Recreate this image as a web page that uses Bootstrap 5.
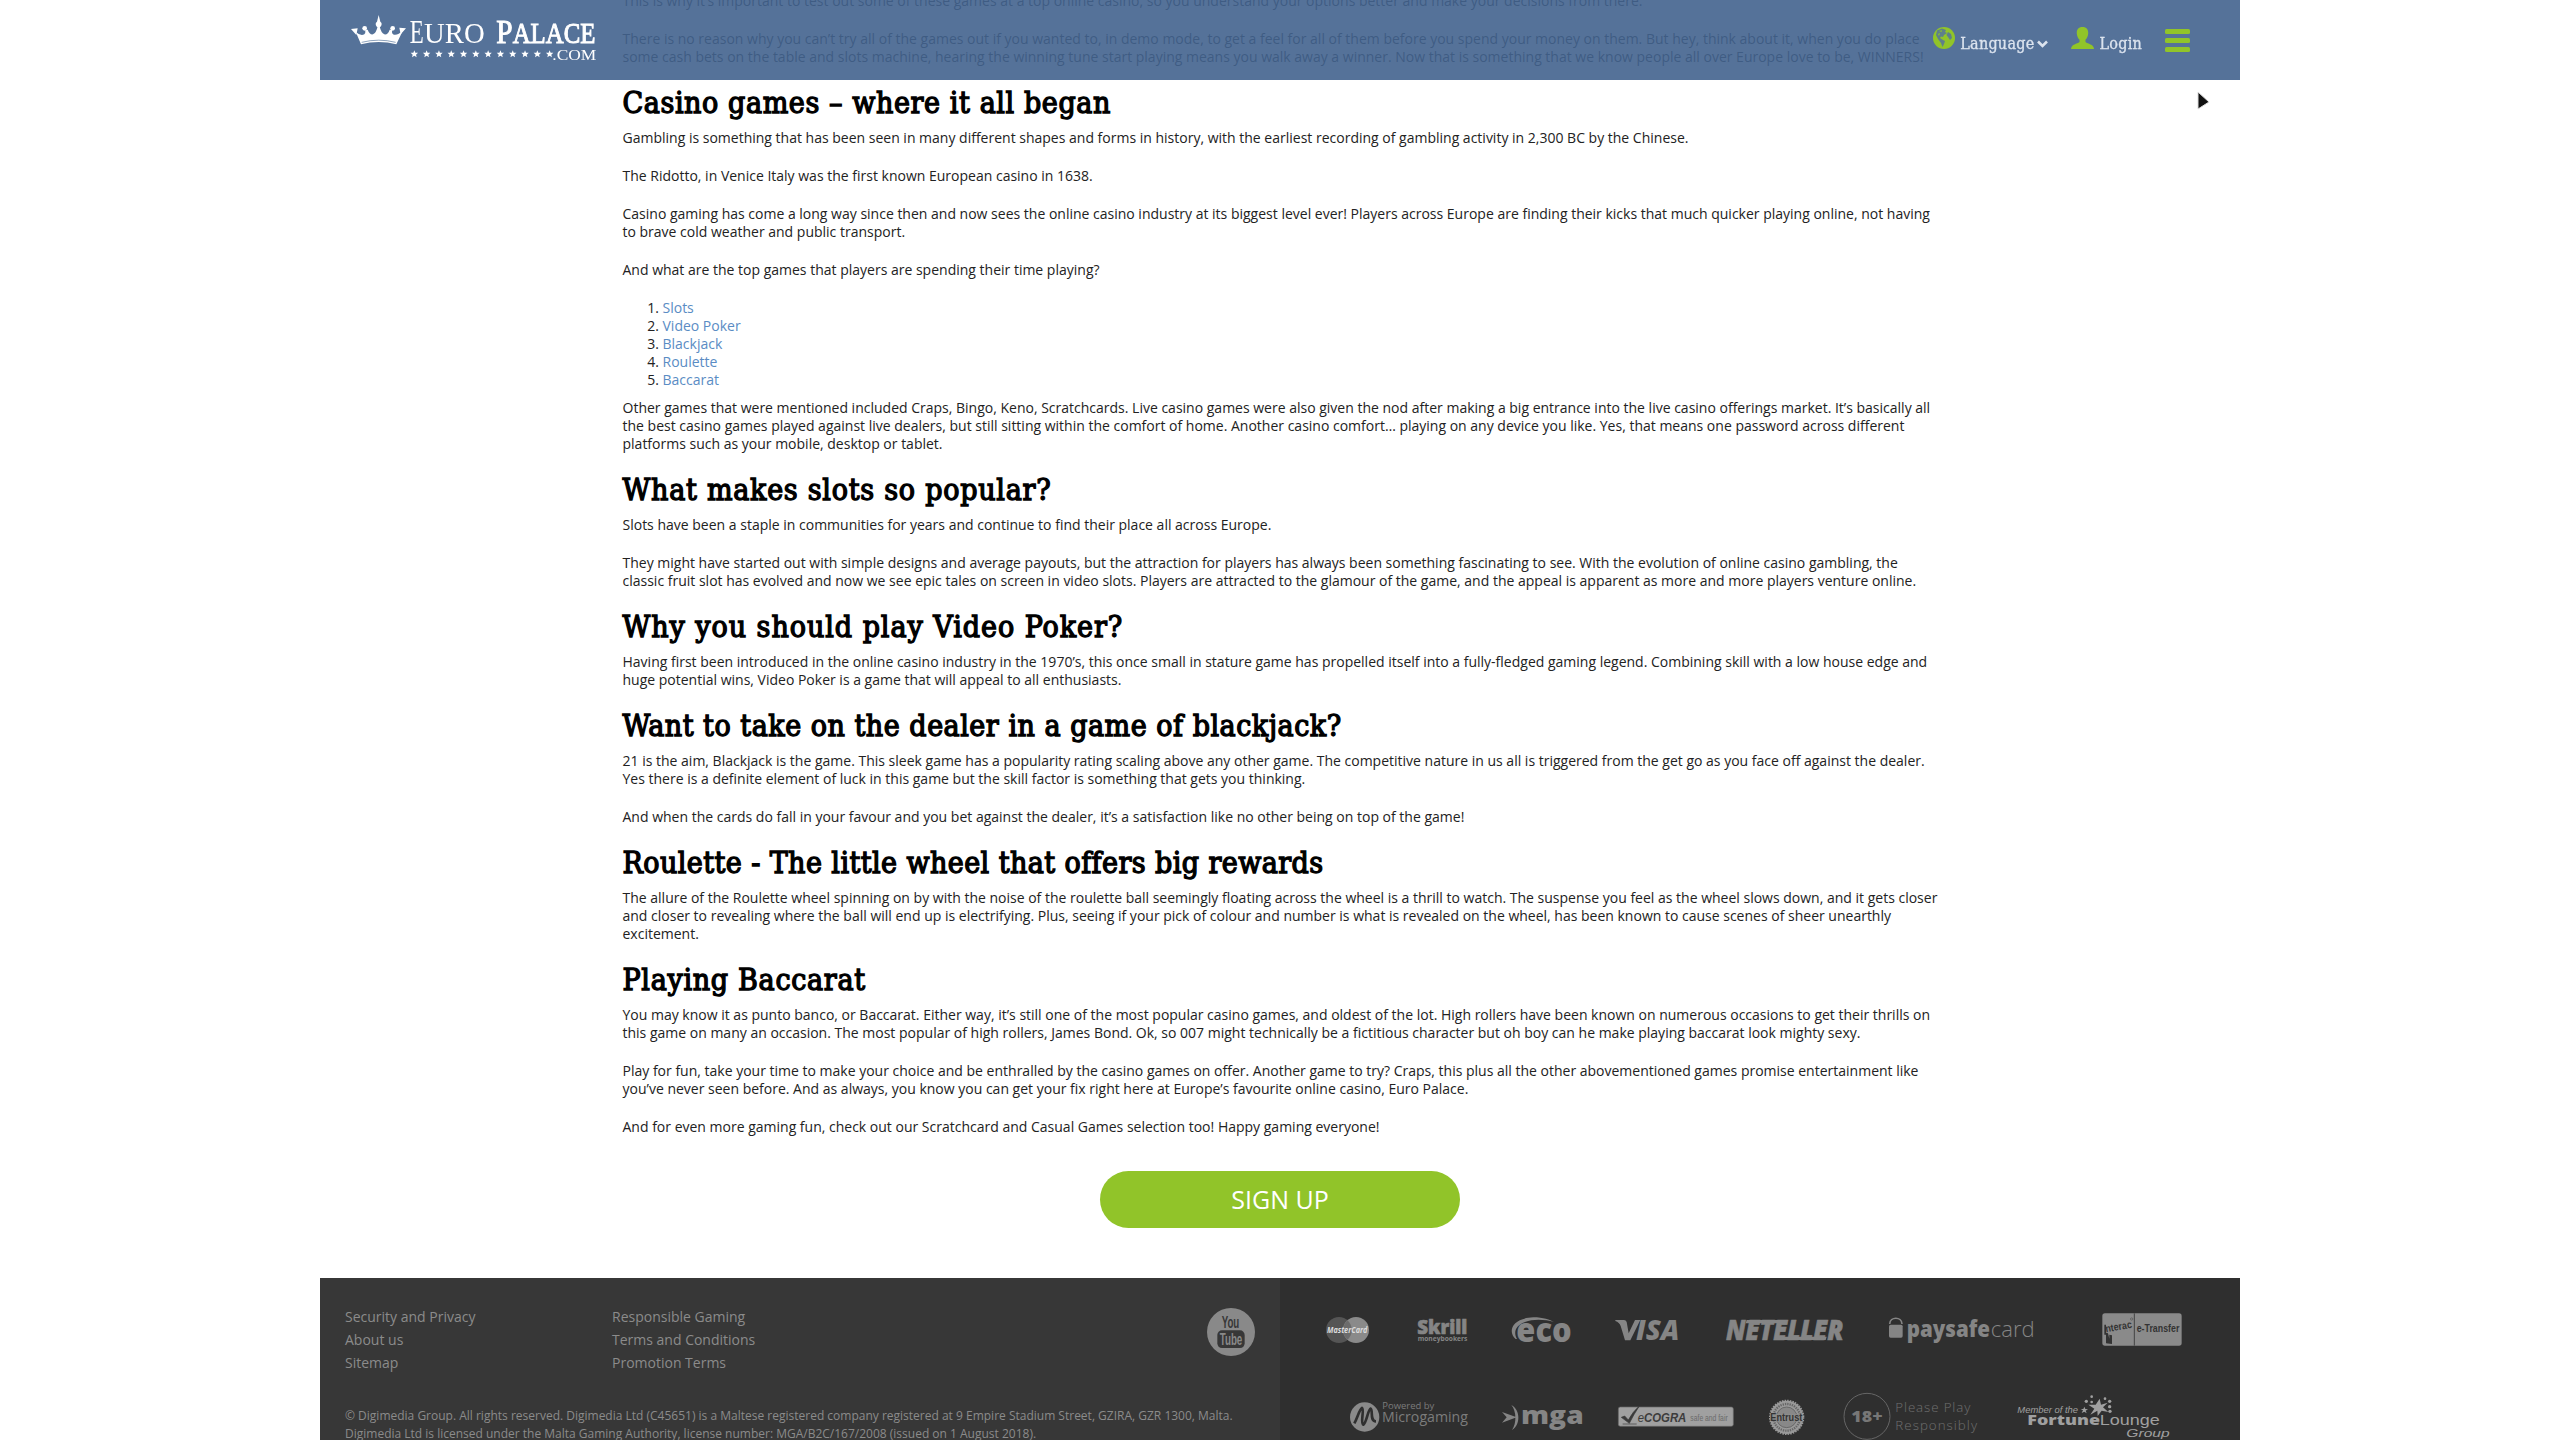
<!DOCTYPE html>
<html lang="en">
<head>
<meta charset="utf-8">
<title>Euro Palace Casino</title>
<meta name="viewport" content="width=device-width, initial-scale=1">
<link href="https://cdn.jsdelivr.net/npm/bootstrap@5.3.0/dist/css/bootstrap.min.css" rel="stylesheet">
<style>
  html, body { height: 100%; overflow: hidden; }
  body { font: 14px/18px "Open Sans", sans-serif; color: #222; background: #fff; }
  .page-shell { width: 1920px; margin: 0 auto; }
  .site-header { width: 1920px; height: 80px; margin: 0 auto; padding: 0 50px 0 30px; background: rgba(66,99,142,.9); }
  .brand-logo { display: block; margin-top: -5px; }
  .nav-slab { font: 16px/20px "DejaVu Serif Condensed", serif; color: #dbe3ee; letter-spacing: .25px; -webkit-text-stroke: .3px #dbe3ee; }
  .nav-slab:hover { color: #fff; }
  .nav-slab span { margin: 7px 3px 0 5px; }
  .nav-slab .nav-caret { margin-top: 13px; }
  .nav-account { margin-left: 23px; }
  .nav-account span { margin-right: 0; }
  .nav-burger { margin: 2px 0 0 23px; }
  .article-copy { width: 1320px; margin: -8px 0 0 302.5px; white-space: nowrap; }
  .article-copy p { margin-bottom: 20px; }
  .article-copy h2 { font: 400 30px/33px "DejaVu Serif Condensed", serif; color: #000; margin: 0 0 10px; -webkit-text-stroke: 1.3px #000; letter-spacing: .6px; }
  .article-copy .h-slots { letter-spacing: .75px; }
  .article-copy .h-poker { letter-spacing: .96px; }
  .article-copy .h-jack { letter-spacing: .52px; }
  .article-copy .h-wheel { letter-spacing: .43px; }
  .article-copy .h-bacc { letter-spacing: .7px; }
  .article-copy ol { margin: 0 0 10px; padding-left: 40px; }
  .article-copy a { color: #5a8cc4; text-decoration: none; }
  .btn-signup { width: 360px; height: 57px; margin: 15px 0 50px; border-radius: 29px; background: #91c429; color: #fff; font-size: 25px; line-height: 1; border: 0; }
  .btn-signup:hover { background: #83b422; color: #fff; }
  .foot-left { width: 960px; height: 170px; background: #373737; padding: 27px 25px 0; }
  .foot-right { width: 960px; height: 170px; background: #2f2f2f; padding: 27px 0 0 46px; }
  .foot-links a { color: #8b8b8b; text-decoration: none; line-height: 23px; display: block; }
  .foot-links ul { width: 267px; }
  .yt-badge { margin: 3px 0 0 328px; }
  .legal-copy { font-size: 12px; line-height: 18px; color: #8b8b8b; margin-top: 33px; white-space: nowrap; }
  .logo-strip svg { flex: none; height: 50px; overflow: visible; }
  .logo-strip + .logo-strip { margin: 35px 0 0 24px; }
  .mouse-pointer { left: 2197px; top: 91px; z-index: 1040; }
  svg text { white-space: pre; }
</style>
</head>
<body>
<header class="site-header fixed-top d-flex align-items-center justify-content-between">
  <a href="#" aria-label="Euro Palace"><svg class="brand-logo" width="250" height="65" viewBox="29 0 750 195">
    <g fill="#fff">
      <path d="M62 118 L46 80 Q60 94 72 88 Q76 84 75 74 L82 74 Q88 90 98 88 Q108 84 112 64 L118 64 Q122 84 132 88 Q143 90 148 74 L155 74 Q154 84 158 88 Q170 94 188 76 L168 118 Q115 104 62 118Z"/>
      <path d="M115 30 L120 50 Q128 56 120 66 L110 66 Q102 56 110 50Z"/>
      <circle cx="73" cy="70" r="7"/><circle cx="157" cy="70" r="7"/><path d="M32 72 L52 70 L48 90Z M197 70 L177 68 L181 88Z"/>
    </g>
    <path d="M64 112 Q115 99 166 112" fill="none" stroke="#55749b" stroke-width="2"/>
    <g fill="#fff" font-family="Liberation Serif, serif">
      <text x="208" y="115" font-size="102" textLength="42" lengthAdjust="spacingAndGlyphs">E</text>
      <text x="251" y="115" font-size="88" textLength="182" lengthAdjust="spacingAndGlyphs">URO</text>
      <g stroke="#fff" stroke-width="3"><text x="468" y="115" font-size="102" textLength="49" lengthAdjust="spacingAndGlyphs">P</text>
      <text x="517" y="115" font-size="88" textLength="248" lengthAdjust="spacingAndGlyphs">ALACE</text></g>
      <text x="636" y="166" font-size="45" textLength="132" lengthAdjust="spacingAndGlyphs">.COM</text>
    </g>
    <g id="stars" fill="#fff"></g>
  </svg></a>
  <nav class="d-flex align-items-start">
    <a class="nav-slab d-flex text-decoration-none" href="#">
      <svg width="22" height="22" viewBox="0 0 22 22"><circle cx="11" cy="11" r="11" fill="#91c429"/><path d="M4 3.5 L9 1.5 L13 3 L12 5 L14 6 L11 8 L10 10 L8 9.500 L7 11 L10 13 L12 14 L11 17 L9.500 20 L8 16 L5 12 L3 8Z M15 5 L18 7 L19 11 L17 13 L15 10 L13.500 8Z" fill="#55749b" opacity=".85"/><path d="M6 4 L9 3.200 L8.500 5Z M5 7 L7 6 L6 9Z" fill="#91c429"/></svg>
      <span>Language</span>
      <svg class="nav-caret" width="11" height="8" viewBox="0 0 11 8"><path d="M1 1.500 L5.500 6 L10 1.500" fill="none" stroke="#dbe3ee" stroke-width="2.600"/></svg>
    </a>
    <a class="nav-slab nav-account d-flex text-decoration-none" href="#">
      <svg width="23" height="22" viewBox="0 0 23 22"><path d="M11.500 0 C15.500 0 17.500 2.500 17.200 6.500 C17 9.500 15.800 11.500 14.500 12.800 V15 C17 17 22.500 17 23 22 H0 C.5 17 6 17 8.500 15 V12.800 C7.200 11.500 6 9.500 5.800 6.500 C5.500 2.500 7.500 0 11.500 0Z" fill="#91c429"/></svg>
      <span>Login</span>
    </a>
    <a class="nav-burger" href="#" aria-label="Menu"><svg class="d-block" width="25" height="23" viewBox="0 0 25 23" fill="#91c429"><rect width="25" height="5" rx="1.500"/><rect y="9" width="25" height="5" rx="1.500"/><rect y="18" width="25" height="5" rx="1.500"/></svg></a>
  </nav>
</header>

<svg class="mouse-pointer position-fixed" width="16" height="22" viewBox="0 0 16 22"><path d="M1 1 V18 L12 11Z" fill="#111" stroke="#ddd" stroke-width="1"/></svg>

<div class="page-shell">
  <main class="article-copy">
    <p>This is why it’s important to test out some of these games at a top online casino, so you understand your options better and make your decisions from there.</p>
    <p>There is no reason why you can’t try all of the games out if you wanted to, in demo mode, to get a feel for all of them before you spend your money on them. But hey, think about it, when you do place<br>some cash bets on the table and slots machine, hearing the winning tune start playing means you walk away a winner. Now that is something that we know people all over Europe love to be, WINNERS!</p>

    <h2>Casino games – where it all began</h2>
    <p>Gambling is something that has been seen in many different shapes and forms in history, with the earliest recording of gambling activity in 2,300 BC by the Chinese.</p>
    <p>The Ridotto, in Venice Italy was the first known European casino in 1638.</p>
    <p>Casino gaming has come a long way since then and now sees the online casino industry at its biggest level ever! Players across Europe are finding their kicks that much quicker playing online, not having<br>to brave cold weather and public transport.</p>
    <p>And what are the top games that players are spending their time playing?</p>
    <ol>
      <li><a href="#">Slots</a></li>
      <li><a href="#">Video Poker</a></li>
      <li><a href="#">Blackjack</a></li>
      <li><a href="#">Roulette</a></li>
      <li><a href="#">Baccarat</a></li>
    </ol>
    <p>Other games that were mentioned included Craps, Bingo, Keno, Scratchcards. Live casino games were also given the nod after making a big entrance into the live casino offerings market. It’s basically all<br>the best casino games played against live dealers, but still sitting within the comfort of home. Another casino comfort… playing on any device you like. Yes, that means one password across different<br>platforms such as your mobile, desktop or tablet.</p>

    <h2 class="h-slots">What makes slots so popular?</h2>
    <p>Slots have been a staple in communities for years and continue to find their place all across Europe.</p>
    <p>They might have started out with simple designs and average payouts, but the attraction for players has always been something fascinating to see. With the evolution of online casino gambling, the<br>classic fruit slot has evolved and now we see epic tales on screen in video slots. Players are attracted to the glamour of the game, and the appeal is apparent as more and more players venture online.</p>

    <h2 class="h-poker">Why you should play Video Poker?</h2>
    <p>Having first been introduced in the online casino industry in the 1970’s, this once small in stature game has propelled itself into a fully-fledged gaming legend. Combining skill with a low house edge and<br>huge potential wins, Video Poker is a game that will appeal to all enthusiasts.</p>

    <h2 class="h-jack">Want to take on the dealer in a game of blackjack?</h2>
    <p>21 is the aim, Blackjack is the game. This sleek game has a popularity rating scaling above any other game. The competitive nature in us all is triggered from the get go as you face off against the dealer.<br>Yes there is a definite element of luck in this game but the skill factor is something that gets you thinking.</p>
    <p>And when the cards do fall in your favour and you bet against the dealer, it’s a satisfaction like no other being on top of the game!</p>

    <h2 class="h-wheel">Roulette - The little wheel that offers big rewards</h2>
    <p>The allure of the Roulette wheel spinning on by with the noise of the roulette ball seemingly floating across the wheel is a thrill to watch. The suspense you feel as the wheel slows down, and it gets closer<br>and closer to revealing where the ball will end up is electrifying. Plus, seeing if your pick of colour and number is what is revealed on the wheel, has been known to cause scenes of sheer unearthly<br>excitement.</p>

    <h2 class="h-bacc">Playing Baccarat</h2>
    <p>You may know it as punto banco, or Baccarat. Either way, it’s still one of the most popular casino games, and oldest of the lot. High rollers have been known on numerous occasions to get their thrills on<br>this game on many an occasion. The most popular of high rollers, James Bond. Ok, so 007 might technically be a fictitious character but oh boy can he make playing baccarat look mighty sexy.</p>
    <p>Play for fun, take your time to make your choice and be enthralled by the casino games on offer. Another game to try? Craps, this plus all the other abovementioned games promise entertainment like<br>you’ve never seen before. And as always, you know you can get your fix right here at Europe’s favourite online casino, Euro Palace.</p>
    <p>And for even more gaming fun, check out our Scratchcard and Casual Games selection too! Happy gaming everyone!</p>
  </main>
  <div class="d-flex justify-content-center"><a href="#" class="btn btn-signup d-flex align-items-center justify-content-center">SIGN UP</a></div>

  <footer class="d-flex">
    <section class="foot-left">
      <div class="foot-links d-flex align-items-start">
        <ul class="list-unstyled mb-0"><li><a href="#">Security and Privacy</a></li><li><a href="#">About us</a></li><li><a href="#">Sitemap</a></li></ul>
        <ul class="list-unstyled mb-0"><li><a href="#">Responsible Gaming</a></li><li><a href="#">Terms and Conditions</a></li><li><a href="#">Promotion Terms</a></li></ul>
        <svg class="yt-badge" width="48" height="48" viewBox="321 444 144 144"><circle cx="393" cy="516" r="72" fill="#898989"/><rect x="352" y="511" width="82" height="53" rx="14" fill="#373737"/>
          <g font-family="Liberation Sans, sans-serif" font-weight="700"><text x="365" y="504" font-size="50" textLength="53" lengthAdjust="spacingAndGlyphs" fill="#373737">You</text><text x="359" y="556" font-size="50" textLength="68" lengthAdjust="spacingAndGlyphs" fill="#898989">Tube</text></g></svg>
      </div>
      <p class="legal-copy mb-0">© Digimedia Group. All rights reserved. Digimedia Ltd (C45651) is a Maltese registered company registered at 9 Empire Stadium Street, GZIRA, GZR 1300, Malta.<br>Digimedia Ltd is licensed under the Malta Gaming Authority, license number: MGA/B2C/167/2008 (issued on 1 August 2018).</p>
    </section>
    <section class="foot-right">
      <div class="logo-strip d-flex">
        <!-- MasterCard -->
        <svg width="92" viewBox="78 45 276 150"><circle cx="117" cy="120" r="39" fill="#555"/><circle cx="168" cy="120" r="39" fill="#8a8a8a"/><path d="M142.500 91 A39 39 0 0 1 142.500 149 A39 39 0 0 1 142.500 91Z" fill="#6c6c6c"/><text x="81" y="129" font-family="Open Sans, sans-serif" font-weight="700" font-style="italic" font-size="24" textLength="121" lengthAdjust="spacingAndGlyphs" fill="#ddd">MasterCard</text></svg>
        <!-- Skrill -->
        <svg width="93" viewBox="354 45 279 150" fill="#858585" font-family="Open Sans, sans-serif" font-weight="800"><text x="352" y="131" font-size="60" textLength="150" lengthAdjust="spacingAndGlyphs" stroke="#858585" stroke-width="2">Skrill</text><text x="353" y="154" font-size="22" font-weight="700" textLength="149" lengthAdjust="spacingAndGlyphs">moneybookers</text></svg>
        <!-- Eco -->
        <svg width="104" viewBox="633 45 312 150" fill="#858585"><path d="M647 147 C620 122 640 84 700 82 C730 82 750 90 762 96 C735 88 700 86 675 96 C645 107 640 128 651 147Z"/><text x="649" y="157" font-family="Open Sans, sans-serif" font-weight="800" font-size="100" textLength="166" lengthAdjust="spacingAndGlyphs">eco</text></svg>
        <!-- Visa -->
        <svg width="111" viewBox="945 45 333 150" fill="#858585"><path d="M946 90 H972 Q978 90 980 96 L986 130 L1005 90 H1021 L991 151 H975 L962 108 Q958 97 946 93Z"/><text x="1008" y="151" font-family="Open Sans, sans-serif" font-weight="800" font-style="italic" font-size="84" textLength="130" lengthAdjust="spacingAndGlyphs">ISA</text></svg>
        <!-- Neteller -->
        <svg width="163" viewBox="78 15 489 150" fill="#858585"><text x="78" y="120" font-family="Open Sans, sans-serif" font-weight="800" font-style="italic" font-size="83" textLength="352" lengthAdjust="spacingAndGlyphs" stroke="#858585" stroke-width="2">NETELLER</text><path d="M245 110 H380 L377 120 H242Z M140 60 H245 L242 70 H137Z"/></svg>
        <!-- paysafecard -->
        <svg width="213" viewBox="567 15 639 150" fill="#858585"><rect x="567" y="74" width="41" height="39" rx="5"/><path d="M569 72 C570 49 605 49 606 72" fill="none" stroke="#858585" stroke-width="5"/><text x="620" y="111" font-family="Open Sans, sans-serif" font-weight="800" font-size="66" textLength="250" lengthAdjust="spacingAndGlyphs">paysafe</text><text x="872" y="111" font-family="Open Sans, sans-serif" font-weight="300" font-size="66" textLength="132" lengthAdjust="spacingAndGlyphs">card</text></svg>
        <!-- Interac e-Transfer -->
        <svg width="80" viewBox="996 45 240 150"><rect x="997" y="70" width="238" height="97" rx="8" fill="#8a8a8a"/><path d="M1093 70 V167" stroke="#444" stroke-width="3"/><path d="M1003 104 V134 H1008 V160 L1026 162 V136 L1018 134 V146 L1014 130 L1008 128 V104Z" fill="#333"/><g font-family="Liberation Sans, sans-serif" font-weight="700" fill="#333"><text x="1008" y="127" font-size="31" textLength="80" lengthAdjust="spacingAndGlyphs" transform="rotate(-10 1008 127)">nterac</text><text x="1100" y="126" font-size="30" textLength="128" lengthAdjust="spacingAndGlyphs">e-Transfer</text></g><circle cx="1085" cy="87" r="3.500" fill="none" stroke="#444" stroke-width="1.500"/></svg>
      </div>
      <div class="logo-strip d-flex">
        <!-- Microgaming -->
        <svg width="152" viewBox="150 300 456 150"><circle cx="194" cy="381" r="44" fill="#8a8a8a"/><path d="M163 400 C172 385 178 358 186 354 C194 358 180 400 190 404 C199 400 204 358 212 356 C220 360 208 394 228 394" fill="none" stroke="#2f2f2f" stroke-width="8"/><g font-family="Open Sans, sans-serif" fill="#7c7c7c"><text x="247" y="358" font-size="29" textLength="156" lengthAdjust="spacingAndGlyphs">Powered by</text><text x="246" y="396" font-size="42" textLength="258" lengthAdjust="spacingAndGlyphs">Microgaming</text></g></svg>
        <!-- MGA -->
        <svg width="116" viewBox="606 300 348 150" fill="#858585"><path d="M606 366 L650 382 L606 398 L620 382Z M634 345 C662 360 662 405 636 420 C650 400 650 364 634 345Z"/><text x="663" y="401" font-family="Open Sans, sans-serif" font-weight="800" font-size="76" textLength="188" lengthAdjust="spacingAndGlyphs">mga</text></svg>
        <!-- eCOGRA -->
        <svg width="151" viewBox="954 300 453 150"><rect x="955" y="351" width="345" height="58" rx="6" fill="#a0a0a0" stroke="#666" stroke-width="2"/><path d="M964 382 L974 378 L985 390 Q998 365 1018 348 Q1000 375 988 400Z M968 402 L1010 402" fill="#3a3a3a" stroke="#3a3a3a" stroke-width="2"/><g font-family="Liberation Sans, sans-serif"><text x="1013" y="395" font-size="38" font-style="italic" textLength="146" lengthAdjust="spacingAndGlyphs" fill="#3c3c3c">e<tspan font-weight="700">COGRA</tspan></text><text x="1171" y="392" font-size="27" textLength="112" lengthAdjust="spacingAndGlyphs" fill="#6a6a6a">safe and fair</text></g></svg>
        <!-- Entrust -->
        <svg width="74" viewBox="207 270 222 150"><circle cx="260" cy="352" r="50" fill="#999"/><circle cx="260" cy="352" r="50" fill="none" stroke="#999" stroke-width="6" stroke-dasharray="4.500 3.354"/><circle cx="260" cy="352" r="31" fill="#888" stroke="#555" stroke-width="2"/><circle cx="260" cy="352" r="40" fill="none" stroke="#666" stroke-width="7" stroke-dasharray="4 3"/><rect x="211" y="342" width="96" height="22" fill="#8c8c8c"/><text x="211" y="363" font-family="Liberation Sans, sans-serif" font-weight="700" font-size="30" textLength="96" lengthAdjust="spacingAndGlyphs" fill="#333">Entrust</text></svg>
        <!-- 18+ -->
        <svg width="174" viewBox="429 270 522 150" font-family="Open Sans, sans-serif"><circle cx="501" cy="349" r="69" fill="none" stroke="#666" stroke-width="3"/><text x="454" y="365" font-size="47" font-weight="800" textLength="94" lengthAdjust="spacingAndGlyphs" fill="#777">18+</text><g fill="#707070" font-size="40" font-weight="300"><text x="586" y="335" textLength="225" lengthAdjust="spacing">Please Play</text><text x="586" y="390" textLength="245" lengthAdjust="spacing">Responsibly</text></g></svg>
        <!-- Fortune Lounge Group -->
        <svg width="153" viewBox="742 300 459 150" fill="#a0a0a0" font-family="Liberation Sans, sans-serif"><text x="743" y="370" font-size="27" font-style="italic" textLength="182" lengthAdjust="spacingAndGlyphs">Member of the</text><text x="773" y="406" font-family="Open Sans, sans-serif" font-weight="800" font-size="40" textLength="218" lengthAdjust="spacingAndGlyphs">Fortune</text><text x="990" y="406" font-size="42" textLength="180" lengthAdjust="spacingAndGlyphs">Lounge</text><text x="1070" y="440" font-size="35" font-style="italic" textLength="130" lengthAdjust="spacingAndGlyphs">Group</text><path d="M990 326 L994 344 L1014 338 L1000 352 L1016 366 L996 362 L984 378 L983 362 L962 374 L974 356 L956 344 L978 344Z M944 350 L947 357 L955 358 L948 362 L951 370 L944 365 L936 369 L940 361 L933 357 L941 357Z"/><circle cx="966" cy="320" r="4"/><circle cx="950" cy="334" r="5"/><circle cx="966" cy="336" r="4"/><circle cx="1006" cy="326" r="4"/><circle cx="1020" cy="334" r="5"/><circle cx="1020" cy="350" r="5"/><circle cx="1021" cy="364" r="5"/></svg>
      </div>
    </section>
  </footer>
</div>
<script>
  // Row of twelve evenly spaced stars below the wordmark
  const starPath = 'M0-11 3-3.500 11-3.500 5 2 7 10 0 5-7 10-5 2-11-3.500-3-3.500Z';
  document.getElementById('stars').innerHTML = Array.from({length: 12}, (_, i) => `<path transform="translate(${222 + i * 36.9} 147)" d="${starPath}"/>`).join('');
</script>
<script src="https://cdn.jsdelivr.net/npm/bootstrap@5.3.0/dist/js/bootstrap.bundle.min.js"></script>
</body>
</html>
